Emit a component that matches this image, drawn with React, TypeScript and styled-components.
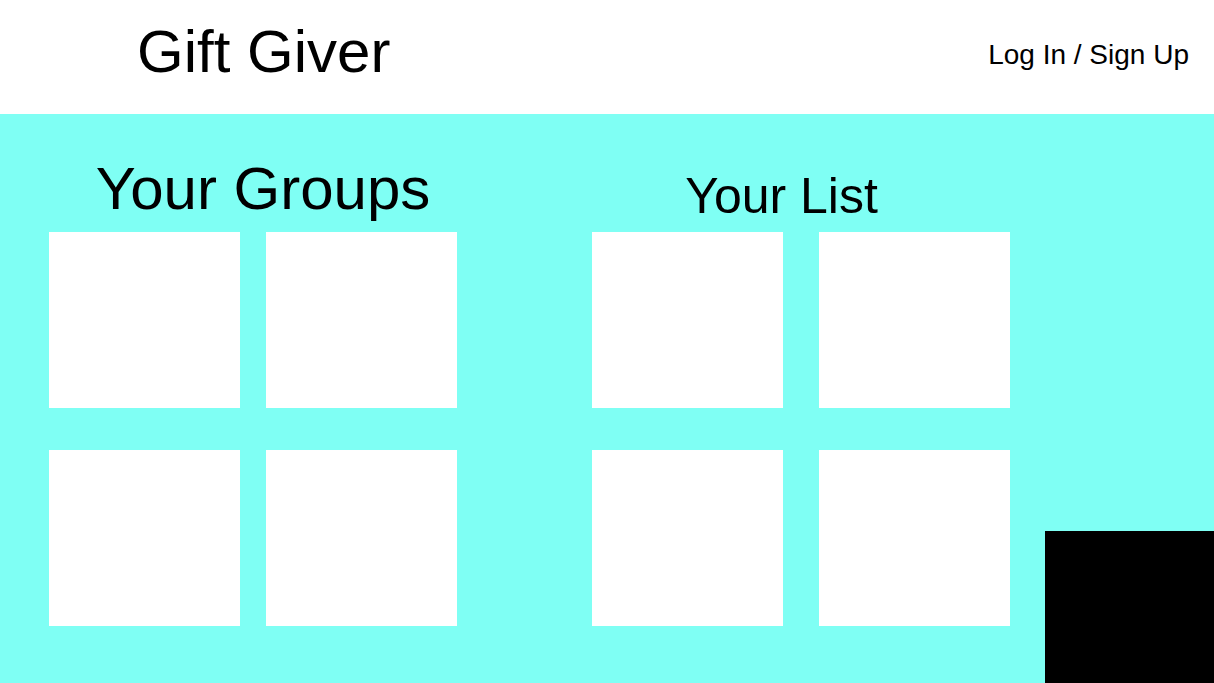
import React from "react";
import styled, { createGlobalStyle } from "styled-components";

const Global = createGlobalStyle`
  html, body { margin: 0; padding: 0; background: #ffffff; }
  body { font-family: "Liberation Sans", Arial, sans-serif; color: #000; }
  * { box-sizing: border-box; }
`;

const Header = styled.header`
  height: 114px;
  background: #ffffff;
  display: flex;
  align-items: flex-start;
  justify-content: space-between;
  padding: 0 25px 0 137px;
`;

const Brand = styled.h1`
  margin: 22px 0 0;
  font-size: 60px;
  line-height: 60px;
  font-weight: 400;
`;

const AuthLink = styled.a`
  margin-top: 41px;
  font-size: 28px;
  line-height: 28px;
  color: #000;
  text-decoration: none;
  cursor: pointer;
`;

const Main = styled.main`
  min-height: calc(100vh - 114px);
  background: #7ffff4;
  display: flex;
  align-items: flex-start;
  padding-left: 49px;
`;

const Section = styled.section<{ $ml?: number }>`
  display: flex;
  flex-direction: column;
  margin-left: ${(p) => p.$ml ?? 0}px;
`;

const Title = styled.h2<{ $size: number; $top: number; $shift: number }>`
  margin: ${(p) => p.$top}px 0 0;
  font-size: ${(p) => p.$size}px;
  line-height: ${(p) => p.$size}px;
  font-weight: 400;
  text-align: center;
  padding-left: ${(p) => Math.max(p.$shift, 0)}px;
  padding-right: ${(p) => Math.max(-p.$shift, 0)}px;
`;

const Grid = styled.div<{ $gap: number; $mt: number }>`
  margin-top: ${(p) => p.$mt}px;
  display: grid;
  grid-template-columns: 191px 191px;
  grid-auto-rows: 176px;
  column-gap: ${(p) => p.$gap}px;
  row-gap: 42px;
`;

const Card = styled.div`
  background: #ffffff;
`;

const Corner = styled.div`
  margin-left: auto;
  align-self: flex-end;
  width: 169px;
  height: 152px;
  background: #000000;
`;

export default function App() {
  return (
    <>
      <Global />
      <Header>
        <Brand>Gift Giver</Brand>
        <AuthLink>Log In / Sign Up</AuthLink>
      </Header>
      <Main>
        <Section>
          <Title $size={60} $top={45} $shift={20}>Your Groups</Title>
          <Grid $gap={26} $mt={13}>
            <Card />
            <Card />
            <Card />
            <Card />
          </Grid>
        </Section>
        <Section $ml={135}>
          <Title $size={50} $top={57} $shift={-39}>Your List</Title>
          <Grid $gap={36} $mt={11}>
            <Card />
            <Card />
            <Card />
            <Card />
          </Grid>
        </Section>
        <Corner />
      </Main>
    </>
  );
}
